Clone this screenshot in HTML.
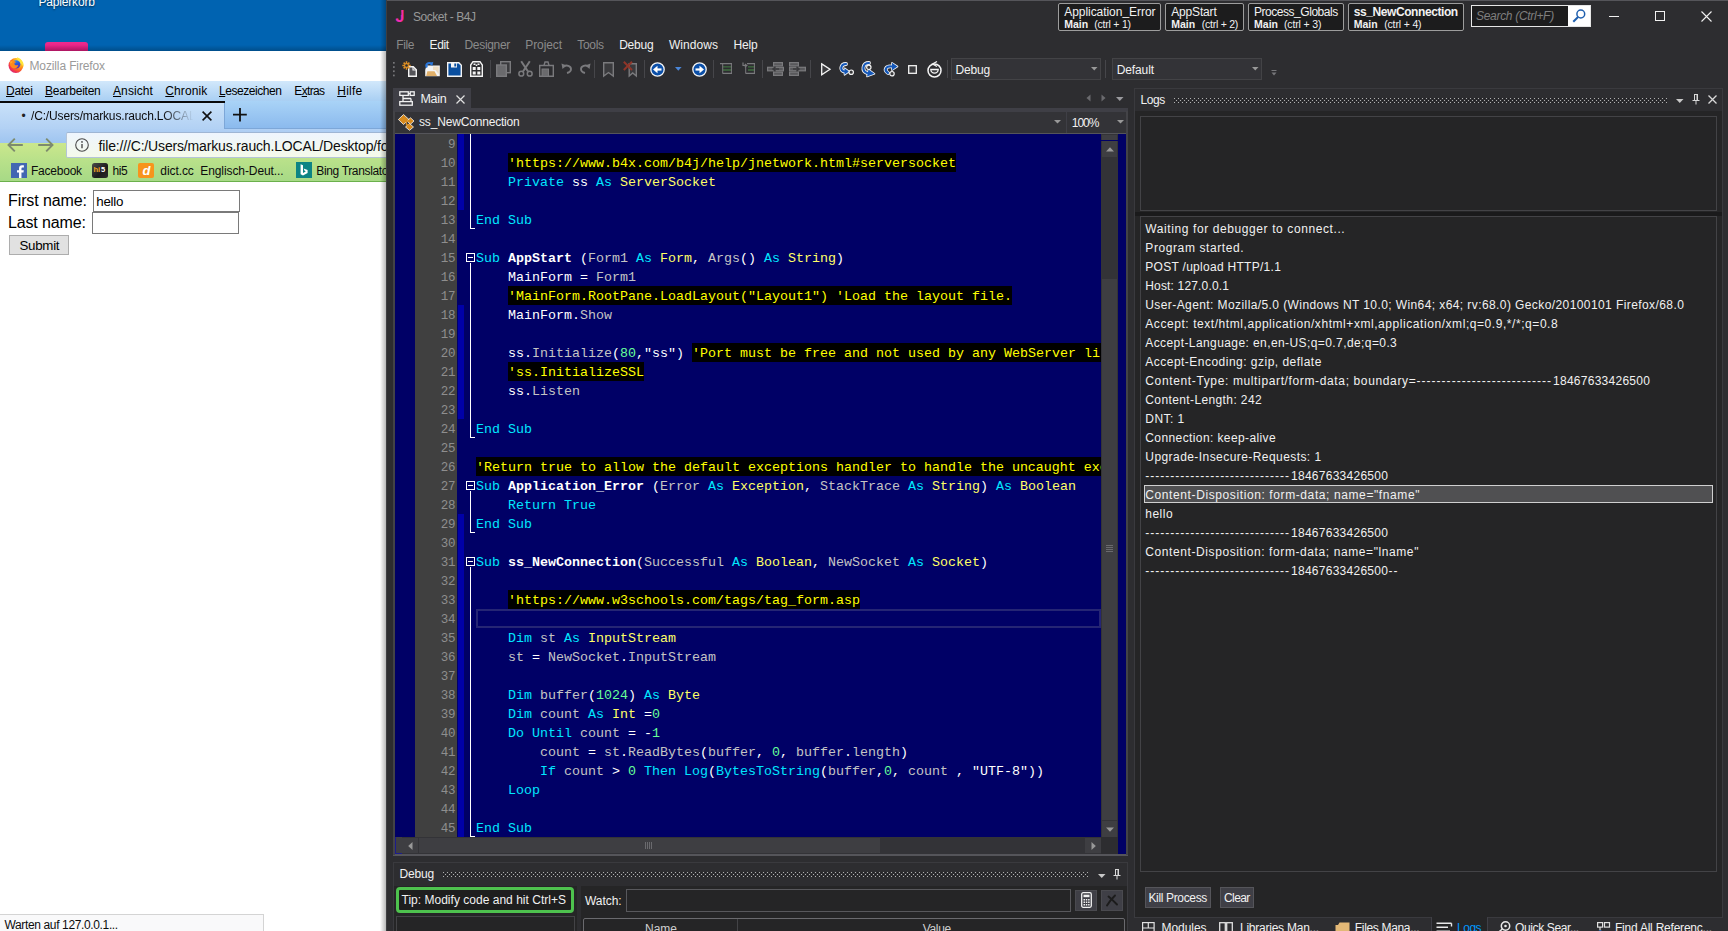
<!DOCTYPE html>
<html lang="en"><head><meta charset="utf-8"><title>Socket - B4J</title>
<style>
html,body{margin:0;padding:0;}
body{width:1728px;height:931px;overflow:hidden;position:relative;background:#2d2d30;font-family:"Liberation Sans", sans-serif;}
.t{position:absolute;white-space:pre;line-height:20px;font-family:"Liberation Sans", sans-serif;}
.r{position:absolute;box-sizing:border-box;}
.cl{position:absolute;left:476px;height:19px;line-height:19px;white-space:pre;font-family:"Liberation Mono", monospace;font-size:13.33px;color:#fff;}
.cl b{font-weight:700;color:#fff}
.k{color:#00e6ff}.y{color:#ffff66}.g{color:#c4c4c4}.n{color:#66ff99}.w{color:#ffffff}
.c{color:#ffff00;background:#000;display:inline-block;height:19px;line-height:21px;vertical-align:top;position:relative;top:-1px}
.ln{position:absolute;left:415px;width:40px;text-align:right;height:19px;line-height:19px;font-family:"Liberation Mono", monospace;font-size:12.5px;letter-spacing:-0.4px;color:#8e8e8e;}
svg{position:absolute;overflow:visible}
u{text-decoration:underline;text-underline-offset:1px}
</style></head>
<body>
<div class="r" style="left:0.00px;top:0.00px;width:386.00px;height:51.00px;background:#0063b1;"></div>
<span class="t" id="t1" style="left:38.50px;top:-8px;font-size:12.00px;color:#ffffff;letter-spacing:-0.182px;text-shadow:0 1px 2px rgba(0,0,0,.6);">Papierkorb</span>
<div class="r" style="left:45.00px;top:42.00px;width:43.00px;height:9.00px;background:linear-gradient(#f12a8e,#dc1c7c);border-radius:3px 3px 0 0;"></div>
<div class="r" style="left:0.00px;top:51.00px;width:386.00px;height:880.00px;background:#ffffff;"></div>
<svg style="left:8px;top:57px" width="16" height="16" viewBox="0 0 16 16">
<defs><radialGradient id="fx1" cx="0.78" cy="0.18" r="1.0"><stop offset="0" stop-color="#fff36a"/><stop offset="0.28" stop-color="#ffc21e"/><stop offset="0.55" stop-color="#ff7a1a"/><stop offset="0.8" stop-color="#f2334f"/><stop offset="1" stop-color="#c31f86"/></radialGradient>
<linearGradient id="fx2" x1="0" y1="0" x2="0.4" y2="1"><stop offset="0" stop-color="#2f9bf0"/><stop offset="0.6" stop-color="#2a55d8"/><stop offset="1" stop-color="#5a34b8"/></linearGradient></defs>
<circle cx="7.900" cy="8.500" r="7.400" fill="url(#fx1)"/>
<path d="M9 0.300C11.500 1 14 2.800 15.100 5.600C15.700 7.300 15.600 9.200 15.200 10.300C14.600 7.600 13.200 6 10.800 5.200C9.600 3.600 9.400 1.800 9 0.300Z" fill="#ffe53a"/>
<circle cx="8.200" cy="7.400" r="4.200" fill="url(#fx2)"/>
<path d="M1.800 5.500C3.600 3.400 6.800 3.900 8.200 5.300C7 5.400 6.300 6 6.400 7C6.600 8.400 8.600 8.700 10.200 7.900C9.800 10.300 7.600 11.800 5.300 11.200C3 10.600 1.300 8 1.800 5.500Z" fill="#ff8a1c"/>
<path d="M2.600 3.800C3.200 4.600 4.200 4.800 5.200 4.500C4 5 3.200 5.800 2.800 7C2.300 6 2.300 4.800 2.600 3.800Z" fill="#ffb52a"/>
</svg>
<span class="t" id="t2" style="left:29.50px;top:56px;font-size:12.00px;color:#9a9a9a;letter-spacing:-0.128px;">Mozilla Firefox</span>
<div class="r" style="left:0.00px;top:81.00px;width:386.00px;height:20.00px;background:linear-gradient(#d2e8fb,#a9cff3);"></div>
<span class="t" id="t3" style="left:6.00px;top:81px;font-size:12.00px;color:#000;letter-spacing:-0.296px;"><u>D</u>atei</span>
<span class="t" id="t4" style="left:45.00px;top:81px;font-size:12.00px;color:#000;letter-spacing:-0.259px;"><u>B</u>earbeiten</span>
<span class="t" id="t5" style="left:113.00px;top:81px;font-size:12.00px;color:#000;letter-spacing:0.096px;"><u>A</u>nsicht</span>
<span class="t" id="t6" style="left:165.30px;top:81px;font-size:12.00px;color:#000;letter-spacing:0.099px;"><u>C</u>hronik</span>
<span class="t" id="t7" style="left:219.00px;top:81px;font-size:12.00px;color:#000;letter-spacing:-0.439px;"><u>L</u>esezeichen</span>
<span class="t" id="t8" style="left:294.30px;top:81px;font-size:12.00px;color:#000;letter-spacing:-0.660px;">E<u>x</u>tras</span>
<span class="t" id="t9" style="left:337.20px;top:81px;font-size:12.00px;color:#000;letter-spacing:0.263px;"><u>H</u>ilfe</span>
<div class="r" style="left:0.00px;top:101.00px;width:386.00px;height:28.00px;background:linear-gradient(#a9d3f7,#8ab9ed);"></div>
<div class="r" style="left:224.00px;top:128.00px;width:162.00px;height:1.00px;background:#7da7d8;"></div>
<div class="r" style="left:0.00px;top:129.00px;width:386.00px;height:14.00px;background:linear-gradient(#b1d0f4,#9fc5f0);"></div>
<div class="r" style="left:0.00px;top:143.00px;width:386.00px;height:17.00px;background:linear-gradient(#cbe78c,#b9e18a);"></div>
<div class="r" style="left:0.00px;top:101.00px;width:224.50px;height:28.00px;background:linear-gradient(#cae2f9,#b2d1f4);border-right:1px solid #7da7d8;"></div>
<div class="r" style="left:0.00px;top:101.00px;width:224.50px;height:2.00px;background:#0a0a0a;"></div>
<span class="t" id="t10" style="left:21.50px;top:106px;font-size:12.00px;color:#222;">•</span>
<span class="t" id="t11" style="left:31.00px;top:106px;font-size:12.00px;color:#0c0c0d;letter-spacing:-0.153px;-webkit-mask-image:linear-gradient(90deg,#000 80%,transparent 99%);mask-image:linear-gradient(90deg,#000 80%,transparent 99%);">/C:/Users/markus.rauch.LOCAL</span>
<svg style="left:202px;top:110.500px" width="10" height="10" viewBox="0 0 10 10"><path d="M0.600 0.600L9.400 9.400M9.400 0.600L0.600 9.400" stroke="#111" stroke-width="1.600" fill="none"/></svg>
<svg style="left:233px;top:107.500px" width="14" height="14" viewBox="0 0 14 14"><path d="M7 0V13.500M0 6.700H13.800" stroke="#111" stroke-width="1.800" fill="none"/></svg>
<svg style="left:7px;top:138px" width="16" height="14" viewBox="0 0 16 14"><path d="M15.800 7H1.500M7.800 0.700L1.500 7L7.800 13.300" stroke="#7d8b6e" stroke-width="1.900" fill="none"/></svg>
<svg style="left:37.5px;top:138px" width="16" height="14" viewBox="0 0 16 14"><path d="M0.200 7H14.500M8.200 0.700L14.500 7L8.200 13.300" stroke="#7d8b6e" stroke-width="1.900" fill="none"/></svg>
<div class="r" style="left:65.50px;top:132.00px;width:330.00px;height:25.50px;background:linear-gradient(#eef5fe,#f5faea);border:1px solid #b4c4d8;border-radius:2px;border-top-color:#9fb6d4;"></div>
<svg style="left:75px;top:138px" width="14" height="14" viewBox="0 0 14 14"><circle cx="7" cy="7" r="6.300" stroke="#4a4a4a" stroke-width="1.100" fill="none"/><path d="M7 6V10.300" stroke="#4a4a4a" stroke-width="1.400"/><circle cx="7" cy="3.900" r="0.900" fill="#4a4a4a"/></svg>
<span class="t" id="t12" style="left:98.50px;top:136px;font-size:14.00px;color:#0c0c0d;letter-spacing:-0.159px;">file:///C:/Users/markus.rauch.LOCAL/Desktop/fo</span>
<div class="r" style="left:0.00px;top:160.00px;width:386.00px;height:22.00px;background:linear-gradient(#b9e18a,#a6d986);"></div>
<div class="r" style="left:0.00px;top:180.50px;width:386.00px;height:1.50px;background:#6bb04c;"></div>
<div class="r" style="left:11.00px;top:162.50px;width:15.50px;height:15.50px;background:#4267b2;"></div>
<svg style="left:11px;top:162.5px;overflow:hidden" width="15.5" height="15.5" viewBox="0 0 16 16"><path d="M10.8 16.5V9.8h2.1l.3-2.4h-2.4V5.9c0-.7.2-1.2 1.2-1.2h1.3V2.5c-.2 0-1-.1-1.9-.1-1.9 0-3.1 1.100-3.100 3.200v1.800H6.200v2.400h2.100V16z" fill="#fff"/></svg>
<span class="t" id="t13" style="left:31.00px;top:161px;font-size:12.00px;color:#0c0c0d;letter-spacing:-0.227px;">Facebook</span>
<div class="r" style="left:92.00px;top:162.50px;width:16.00px;height:15.50px;background:linear-gradient(135deg,#4a4a4a,#1c1c1c 60%,#2c2c2c);border-radius:2.5px;"></div>
<span class="t" id="t14" style="left:93.50px;top:160px;font-size:7.50px;color:#f7a823;font-weight:700;">hi</span>
<span class="t" id="t15" style="left:101.00px;top:160px;font-size:7.50px;color:#ffffff;font-weight:700;">5</span>
<span class="t" id="t16" style="left:112.50px;top:161px;font-size:12.00px;color:#0c0c0d;letter-spacing:-0.366px;">hi5</span>
<div class="r" style="left:138.30px;top:162.50px;width:15.50px;height:15.50px;background:#f7941d;border-radius:2px;"></div>
<span class="t" id="t17" style="left:142.50px;top:161px;font-size:13.00px;color:#fff;font-weight:700;font-style:italic;">d</span>
<span class="t" id="t18" style="left:160.30px;top:161px;font-size:12.00px;color:#0c0c0d;letter-spacing:-0.085px;">dict.cc  Englisch-Deut...</span>
<div class="r" style="left:296.00px;top:162.00px;width:16.00px;height:16.00px;background:#0c8484;"></div>
<svg style="left:296px;top:162px" width="16" height="16" viewBox="0 0 16 16"><path d="M4.6 2.300V12.200L7 13.600L11.600 10.900V8.100L7.600 6.600L8.600 8.800L9.800 9.400L7 11V3.200Z" fill="#fff"/></svg>
<span class="t" id="t19" style="left:316.30px;top:161px;font-size:12.00px;color:#0c0c0d;letter-spacing:-0.350px;">Bing Translato</span>
<span class="t" id="t20" style="left:8.00px;top:191px;font-size:16.00px;color:#000;letter-spacing:-0.097px;">First name:</span>
<div class="r" style="left:92.50px;top:190.00px;width:147.50px;height:22.00px;background:#fff;border:1px solid #7a7a7a;"></div>
<span class="t" id="t21" style="left:96.30px;top:192px;font-size:13.33px;color:#000;letter-spacing:-0.260px;">hello</span>
<span class="t" id="t22" style="left:8.00px;top:213px;font-size:16.00px;color:#000;letter-spacing:-0.143px;">Last name:</span>
<div class="r" style="left:92.00px;top:212.00px;width:147.00px;height:22.00px;background:#fff;border:1px solid #7a7a7a;"></div>
<div class="r" style="left:9.00px;top:235.00px;width:60.00px;height:20.00px;background:#e1e1e1;border:1px solid #adadad;"></div>
<span class="t" id="t23" style="left:19.40px;top:236px;font-size:13.33px;color:#000;letter-spacing:-0.270px;">Submit</span>
<div class="r" style="left:-1.00px;top:913.50px;width:265.00px;height:19.00px;background:#f9f9fa;border:1px solid #d4d4d4;"></div>
<span class="t" id="t24" style="left:4.50px;top:915px;font-size:12.00px;color:#0c0c0d;letter-spacing:-0.362px;">Warten auf 127.0.0.1...</span>
<div class="r" style="left:380.00px;top:0.00px;width:6.00px;height:931.00px;background:linear-gradient(90deg,rgba(0,0,0,0),rgba(0,0,0,.28));"></div>
<div class="r" style="left:386.00px;top:0.00px;width:1342.00px;height:931.00px;background:#2d2d30;"></div>
<div class="r" style="left:386.00px;top:0.00px;width:1342.00px;height:1.00px;background:#55555a;"></div>
<div class="r" style="left:386.00px;top:0.00px;width:1.00px;height:931.00px;background:#3e3e41;"></div>
<div class="r" style="left:0.00px;top:45.00px;width:386.00px;height:6.00px;background:linear-gradient(rgba(0,0,0,0),rgba(0,0,0,.22));"></div>
<span class="t" id="t25" style="left:395.30px;top:6px;font-size:16.50px;color:#f22bb0;font-weight:700;clip-path:polygon(6px 0,100% 0,100% 100%,0 100%,0 9px,6px 9px);">J</span>
<span class="t" id="t26" style="left:413.00px;top:7px;font-size:12.00px;color:#999999;letter-spacing:-0.455px;">Socket - B4J</span>
<span class="t" id="t27" style="left:396.20px;top:35px;font-size:12.00px;color:#8a8a8a;letter-spacing:-0.327px;">File</span>
<span class="t" id="t28" style="left:429.50px;top:35px;font-size:12.00px;color:#f1f1f1;letter-spacing:-0.339px;">Edit</span>
<span class="t" id="t29" style="left:464.50px;top:35px;font-size:12.00px;color:#8a8a8a;letter-spacing:-0.311px;">Designer</span>
<span class="t" id="t30" style="left:525.30px;top:35px;font-size:12.00px;color:#8a8a8a;letter-spacing:-0.101px;">Project</span>
<span class="t" id="t31" style="left:577.20px;top:35px;font-size:12.00px;color:#8a8a8a;letter-spacing:-0.270px;">Tools</span>
<span class="t" id="t32" style="left:619.20px;top:35px;font-size:12.00px;color:#f1f1f1;letter-spacing:-0.239px;">Debug</span>
<span class="t" id="t33" style="left:669.00px;top:35px;font-size:12.00px;color:#f1f1f1;letter-spacing:0.048px;">Windows</span>
<span class="t" id="t34" style="left:733.50px;top:35px;font-size:12.00px;color:#f1f1f1;letter-spacing:-0.139px;">Help</span>
<div class="r" style="left:1058.00px;top:3.00px;width:103.00px;height:28.00px;background:#1c1c1d;border:1px solid #9d9d9d;border-radius:2px;"></div>
<span class="t" id="t35" style="left:1064.20px;top:2px;font-size:12.00px;color:#f1f1f1;letter-spacing:-0.047px;">Application<span style="position:relative;top:-1.5px">_</span>Error</span>
<span class="t" id="t36" style="left:1064.20px;top:14px;font-size:10.50px;color:#f1f1f1;letter-spacing:0.022px;font-weight:700;">Main</span>
<span class="t" id="t37" style="left:1094.20px;top:14px;font-size:10.50px;color:#f1f1f1;letter-spacing:-0.210px;">(ctrl + 1)</span>
<div class="r" style="left:1165.00px;top:3.00px;width:78.70px;height:28.00px;background:#1c1c1d;border:1px solid #9d9d9d;border-radius:2px;"></div>
<span class="t" id="t38" style="left:1171.20px;top:2px;font-size:12.00px;color:#f1f1f1;letter-spacing:-0.160px;">AppStart</span>
<span class="t" id="t39" style="left:1171.20px;top:14px;font-size:10.50px;color:#f1f1f1;letter-spacing:0.022px;font-weight:700;">Main</span>
<span class="t" id="t40" style="left:1201.70px;top:14px;font-size:10.50px;color:#f1f1f1;letter-spacing:-0.242px;">(ctrl + 2)</span>
<div class="r" style="left:1248.00px;top:3.00px;width:95.50px;height:28.00px;background:#1c1c1d;border:1px solid #9d9d9d;border-radius:2px;"></div>
<span class="t" id="t41" style="left:1254.00px;top:2px;font-size:12.00px;color:#f1f1f1;letter-spacing:-0.464px;">Process<span style="position:relative;top:-1.5px">_</span>Globals</span>
<span class="t" id="t42" style="left:1254.00px;top:14px;font-size:10.50px;color:#f1f1f1;letter-spacing:0.022px;font-weight:700;">Main</span>
<span class="t" id="t43" style="left:1284.00px;top:14px;font-size:10.50px;color:#f1f1f1;letter-spacing:-0.147px;">(ctrl + 3)</span>
<div class="r" style="left:1348.00px;top:3.00px;width:115.50px;height:28.00px;background:#1c1c1d;border:1px solid #9d9d9d;border-radius:2px;"></div>
<span class="t" id="t44" style="left:1353.70px;top:2px;font-size:12.00px;color:#f1f1f1;letter-spacing:-0.414px;font-weight:700;">ss<span style="position:relative;top:-1.5px">_</span>NewConnection</span>
<span class="t" id="t45" style="left:1353.70px;top:14px;font-size:10.50px;color:#f1f1f1;letter-spacing:0.022px;font-weight:700;">Main</span>
<span class="t" id="t46" style="left:1384.20px;top:14px;font-size:10.50px;color:#f1f1f1;letter-spacing:-0.158px;">(ctrl + 4)</span>
<div class="r" style="left:1470.50px;top:5.00px;width:120.50px;height:22.00px;background:#1c1c1d;border:1px solid #e6e6e6;"></div>
<div class="r" style="left:1568.00px;top:6.00px;width:22.00px;height:20.00px;background:#ffffff;"></div>
<span class="t" id="t47" style="left:1476.00px;top:6px;font-size:12.00px;color:#7f7f7f;letter-spacing:-0.301px;font-style:italic;">Search (Ctrl+F)</span>
<svg style="left:1571px;top:8px" width="16" height="16" viewBox="0 0 16 16"><circle cx="9.8" cy="6" r="3.900" stroke="#1f5fae" stroke-width="1.5" fill="none"/><path d="M7 9L2.300 13.700" stroke="#1f5fae" stroke-width="2"/></svg>
<div class="r" style="left:1609.00px;top:16.00px;width:10.00px;height:1.00px;background:#f1f1f1;"></div>
<svg style="left:1655px;top:11px" width="11" height="11" viewBox="0 0 11 11"><rect x="0.5" y="0.5" width="9" height="9" stroke="#f1f1f1" stroke-width="1" fill="none"/></svg>
<svg style="left:1701px;top:11px" width="11" height="11" viewBox="0 0 11 11"><path d="M0.5 0.5L10.5 10.5M10.5 0.5L0.5 10.5" stroke="#f1f1f1" stroke-width="1.1" fill="none"/></svg>
<svg style="left:393.3px;top:62px" width="2" height="15" viewBox="0 0 2 15"><g fill="#77777a"><rect x="0" y="0" width="1.700" height="1.700"/><rect x="0" y="4.200" width="1.700" height="1.700"/><rect x="0" y="8.400" width="1.700" height="1.700"/><rect x="0" y="12.600" width="1.700" height="1.700"/></g></svg>
<svg style="left:402px;top:61px" width="16" height="16" viewBox="0 0 16 16"><path d="M6.700 5.700H11.300L14.300 8.700V15.300H6.700Z" fill="#55555a" stroke="#f4f4f4" stroke-width="1.400"/><path d="M11 6V9H14" stroke="#f4f4f4" stroke-width="1.100" fill="none"/><g stroke="#de8f24" stroke-width="1.500"><path d="M4.500 0.300V8.700M0.300 4.500H8.700M1.600 1.600L7.400 7.400M7.400 1.600L1.600 7.400"/></g><circle cx="4.500" cy="4.500" r="1.300" fill="#2d2d30"/></svg>
<svg style="left:423.5px;top:61px" width="17" height="16" viewBox="0 0 17 16"><path d="M2.500 4.500H15.800V15.300H1.200L1.200 9Z" fill="#f4f4f4"/><path d="M2.200 15L3.400 10.200H10.500L13 15Z" fill="#e0b06a"/><path d="M9 5.500H14.700V13L11.500 9H9Z" fill="#e8c690" opacity=".5"/><path d="M3 6.500C1 3.500 4 0.800 7.500 2.500" stroke="#2a78dc" stroke-width="2" fill="none"/><path d="M9.300 0.800L8.300 5L5.300 2.500Z" fill="#2a78dc"/></svg>
<svg style="left:447px;top:62px" width="15" height="15" viewBox="0 0 15 15"><path d="M0.700 0.700H11.800L14.300 3.200V14.300H0.700Z" fill="#0a4fa0" stroke="#f4f4f4" stroke-width="1.400"/><rect x="4" y="1" width="6" height="4.500" fill="#f4f4f4"/><rect x="7.300" y="1.500" width="1.900" height="3" fill="#0a4fa0"/></svg>
<svg style="left:469.5px;top:61px" width="13" height="16" viewBox="0 0 13 16"><path d="M0.700 4L3 0.700H10L12.300 4V15.300H0.700Z" fill="#2d2d30" stroke="#f4f4f4" stroke-width="1.400"/><g fill="#f4f4f4"><rect x="2.700" y="6" width="3" height="3"/><rect x="7.300" y="6" width="3" height="3"/><rect x="2.700" y="10.500" width="3" height="3"/><rect x="7.300" y="10.500" width="3" height="3"/><rect x="3.500" y="2.500" width="2" height="1.500"/><rect x="7.500" y="2.500" width="2" height="1.500"/><rect x="5.700" y="3.500" width="1.600" height="1.500"/></g></svg>
<div class="r" style="left:489.50px;top:60.00px;width:1.00px;height:18.00px;background:#46464a;"></div>
<svg style="left:495.5px;top:61px" width="15" height="16" viewBox="0 0 15 16"><rect x="4.700" y="0.700" width="9.600" height="11" fill="#3a3a3d" stroke="#7a7a7d" stroke-width="1.400"/><rect x="0.700" y="4" width="9.600" height="11.300" fill="#6a6a6d" stroke="#7a7a7d" stroke-width="1.400"/></svg>
<svg style="left:517.5px;top:61px" width="15" height="16" viewBox="0 0 15 16"><g stroke="#7a7a7d" stroke-width="2" fill="none"><path d="M3.200 0.300L10 10.500M11.800 0.300L5 10.500"/></g><g stroke="#7a7a7d" stroke-width="1.500" fill="none"><circle cx="3.300" cy="12.700" r="2.400"/><circle cx="11.700" cy="12.700" r="2.400"/></g></svg>
<svg style="left:539px;top:61px" width="15" height="16" viewBox="0 0 15 16"><g stroke="#7a7a7d" stroke-width="1.400" fill="none"><path d="M0.700 15.300V4.500H14.300V15.300Z"/><path d="M5 4.500L6 1H9L10 4.500"/></g><rect x="3" y="8" width="6.500" height="7.300" fill="#6a6a6d" stroke="#7a7a7d" stroke-width="1"/></svg>
<svg style="left:560.5px;top:63px" width="12" height="11" viewBox="0 0 12 11"><path d="M2.500 3.500C5.500 1.500 10 3 10 6C10 8 8 9.500 6 10" stroke="#7a7a7d" stroke-width="1.900" fill="none"/><path d="M0.500 0.500L5.500 2.500L1.500 6Z" fill="#7a7a7d"/></svg>
<svg style="left:578.5px;top:63px" width="12" height="11" viewBox="0 0 12 11"><path d="M9.500 3.500C6.500 1.500 2 3 2 6C2 8 4 9.500 6 10" stroke="#7a7a7d" stroke-width="1.900" fill="none"/><path d="M11.500 0.500L6.500 2.500L10.500 6Z" fill="#7a7a7d"/></svg>
<div class="r" style="left:594.00px;top:60.00px;width:1.00px;height:18.00px;background:#46464a;"></div>
<svg style="left:603px;top:62px" width="11" height="15" viewBox="0 0 11 15"><path d="M0.700 0.700H10.300V14L5.500 10.500L0.700 14Z" stroke="#7a7a7d" stroke-width="1.400" fill="#3a3a3d"/></svg>
<svg style="left:623px;top:61px" width="15" height="16" viewBox="0 0 15 16"><path d="M6.200 2.700H13.300V15L9.700 12L6.200 15Z" stroke="#7a7a7d" stroke-width="1.400" fill="#3a3a3d"/><path d="M0.800 0.800L9 9M9 0.800L0.800 9" stroke="#8f3529" stroke-width="2"/></svg>
<div class="r" style="left:643.50px;top:60.00px;width:1.00px;height:18.00px;background:#46464a;"></div>
<svg style="left:649.5px;top:61.500px" width="15" height="15" viewBox="0 0 15 15"><circle cx="7.500" cy="7.500" r="6.700" fill="#0b4fa8" stroke="#f4f4f4" stroke-width="1.300"/><path d="M11.500 7.500H5" stroke="#fff" stroke-width="2.200" fill="none"/><path d="M7.500 3.800V11.200L3 7.500Z" fill="#fff"/></svg>
<svg style="left:674.8px;top:66.700px" width="7" height="4" viewBox="0 0 7 4"><path d="M0 0H6.600L3.300 3.800Z" fill="#4a86d8"/></svg>
<svg style="left:691.6px;top:61.500px" width="15" height="15" viewBox="0 0 15 15"><circle cx="7.500" cy="7.500" r="6.700" fill="#0b4fa8" stroke="#f4f4f4" stroke-width="1.300"/><path d="M3.500 7.500H10" stroke="#fff" stroke-width="2.200" fill="none"/><path d="M7.500 3.800V11.200L12 7.500Z" fill="#fff"/></svg>
<div class="r" style="left:712.50px;top:60.00px;width:1.00px;height:18.00px;background:#46464a;"></div>
<svg style="left:720px;top:63px" width="12" height="11" viewBox="0 0 12 11"><g fill="none" stroke-width="1.300"><path d="M0 0.700H12M2.500 10.300H12" stroke="#7a7a7d"/><path d="M3 3.800H12M3 7H12" stroke="#3f6f3f"/><path d="M2.700 0.700V10.300M11.400 0.700V10.300" stroke="#7a7a7d" stroke-width="1"/></g></svg>
<svg style="left:741.5px;top:62px" width="13" height="12" viewBox="0 0 13 12"><g fill="none" stroke-width="1.300"><path d="M5 1.700H13M3.500 11.300H13" stroke="#7a7a7d"/><path d="M6 4.800H13M6 8H13" stroke="#3f6f3f"/><path d="M3.700 5V11.300M12.400 1.700V11.300" stroke="#7a7a7d" stroke-width="1"/><path d="M1 0.500V3.500H4.500M2.800 2L4.800 3.600L2.800 5.200" stroke="#7a7a7d" stroke-width="1.200"/></g></svg>
<div class="r" style="left:761.50px;top:60.00px;width:1.00px;height:18.00px;background:#46464a;"></div>
<svg style="left:767px;top:62px" width="17" height="14" viewBox="0 0 17 14"><g stroke="#7a7a7d" stroke-width="1.200" fill="#59595c"><rect x="6.600" y="0.600" width="8.800" height="3.300"/><rect x="0.600" y="5.300" width="15.800" height="3.500"/><rect x="6.600" y="10.100" width="8.800" height="3.300"/></g><path d="M12 7H6.500M8.500 4.800L6 7L8.500 9.200" stroke="#3a3a3d" stroke-width="1.500" fill="none"/></svg>
<svg style="left:789px;top:62px" width="17" height="14" viewBox="0 0 17 14"><g stroke="#7a7a7d" stroke-width="1.200" fill="#59595c"><rect x="0.600" y="0.600" width="8.800" height="3.300"/><rect x="0.600" y="5.300" width="15.800" height="3.500"/><rect x="0.600" y="10.100" width="8.800" height="3.300"/></g><path d="M4 7H9.500M7.500 4.800L10 7L7.500 9.200" stroke="#3a3a3d" stroke-width="1.500" fill="none"/></svg>
<div class="r" style="left:810.00px;top:60.00px;width:1.00px;height:18.00px;background:#46464a;"></div>
<svg style="left:820.5px;top:62.500px" width="10" height="13" viewBox="0 0 10 13"><path d="M0.700 0.900L9 6.300L0.700 11.700Z" stroke="#f4f4f4" stroke-width="1.300" fill="#3a3a3d"/></svg>
<svg style="left:837.5px;top:61.5px" width="17" height="14" viewBox="0 0 17 14"><path d="M8 2C2.500 2 1.500 9 6.500 9.500" stroke="#f4f4f4" stroke-width="3.800" fill="none" stroke-linecap="round"/><path d="M6.500 6.200L11 9.500L6.500 12.800Z" fill="#f4f4f4" stroke="#f4f4f4" stroke-width="1.600" stroke-linejoin="round"/><path d="M8 2C2.500 2 1.500 9 6.500 9.500" stroke="#1457b8" stroke-width="2.200" fill="none" stroke-linecap="round"/><path d="M6.500 6.200L11 9.500L6.500 12.800Z" fill="#1457b8"/><circle cx="13.2" cy="10.2" r="2.200" stroke="#f4f4f4" stroke-width="1.200" fill="#3a3a3d"/></svg>
<svg style="left:861px;top:61px" width="15" height="17" viewBox="0 0 15 17"><path d="M8 2C1.500 2 0.500 10 6 12" stroke="#f4f4f4" stroke-width="3.800" fill="none" stroke-linecap="round"/><path d="M7.500 8.500L13.500 12.800L6 15.500Z" fill="#f4f4f4" stroke="#f4f4f4" stroke-width="1.600" stroke-linejoin="round"/><path d="M8 2C1.500 2 0.500 10 6 12" stroke="#1457b8" stroke-width="2.200" fill="none" stroke-linecap="round"/><path d="M7.500 8.500L13.500 12.800L6 15.500Z" fill="#1457b8"/><circle cx="7.8" cy="6.3" r="2.200" stroke="#f4f4f4" stroke-width="1.200" fill="#3a3a3d"/></svg>
<svg style="left:882.5px;top:61.5px" width="16" height="15" viewBox="0 0 16 15"><path d="M5 11C0.500 8 3 3.500 9 4.500" stroke="#f4f4f4" stroke-width="3.800" fill="none" stroke-linecap="round"/><path d="M9 0.800L14.500 4.500L9 8.200Z" fill="#f4f4f4" stroke="#f4f4f4" stroke-width="1.600" stroke-linejoin="round"/><path d="M5 11C0.500 8 3 3.500 9 4.500" stroke="#1457b8" stroke-width="2.200" fill="none" stroke-linecap="round"/><path d="M9 0.800L14.500 4.500L9 8.200Z" fill="#1457b8"/><circle cx="9" cy="11.7" r="2.200" stroke="#f4f4f4" stroke-width="1.200" fill="#3a3a3d"/></svg>
<svg style="left:907.5px;top:64.500px" width="9" height="9" viewBox="0 0 9 9"><rect x="0.700" y="0.700" width="7.600" height="7.600" stroke="#f4f4f4" stroke-width="1.300" fill="#3a3a3d"/></svg>
<svg style="left:926.5px;top:61px" width="15" height="17" viewBox="0 0 15 17"><circle cx="7.500" cy="9.500" r="6.500" stroke="#f4f4f4" stroke-width="1.500" fill="none"/><path d="M3.800 8.500A3.700 3.700 0 0 0 11.200 8.500Z" stroke="#f4f4f4" stroke-width="1.300" fill="#3a3a3d"/><path d="M10 0.500L5.500 3L10 5.500" stroke="#f4f4f4" stroke-width="1.300" fill="none"/></svg>
<div class="r" style="left:947.00px;top:60.00px;width:1.00px;height:18.00px;background:#46464a;"></div>
<div class="r" style="left:951.00px;top:58.00px;width:150.00px;height:21.50px;background:#333337;border:1px solid #434346;"></div>
<span class="t" id="t48" style="left:955.50px;top:60px;font-size:12.00px;color:#f1f1f1;letter-spacing:-0.194px;">Debug</span>
<svg style="left:1091px;top:66.500px" width="7" height="4" viewBox="0 0 7 4"><path d="M0 0H6.500L3.250 3.500Z" fill="#999"/></svg>
<div class="r" style="left:1105.00px;top:60.00px;width:1.00px;height:18.00px;background:#46464a;"></div>
<div class="r" style="left:1112.00px;top:58.00px;width:150.00px;height:21.50px;background:#333337;border:1px solid #434346;"></div>
<span class="t" id="t49" style="left:1116.70px;top:60px;font-size:12.00px;color:#f1f1f1;letter-spacing:-0.113px;">Default</span>
<svg style="left:1252px;top:66.500px" width="7" height="4" viewBox="0 0 7 4"><path d="M0 0H6.500L3.250 3.500Z" fill="#999"/></svg>
<svg style="left:1270.5px;top:70px" width="6" height="6" viewBox="0 0 6 6"><path d="M0.500 0.500H5.500" stroke="#77777a" stroke-width="1"/><path d="M0.500 2.500H5.500L3 5.500Z" fill="#77777a"/></svg>
<div class="r" style="left:393.00px;top:88.00px;width:78.00px;height:20.00px;background:#3f3f46;"></div>
<div class="r" style="left:393.00px;top:108.00px;width:735.00px;height:3.00px;background:#3f3f46;"></div>
<svg style="left:399px;top:91px" width="16" height="15" viewBox="0 0 16 15"><g stroke="#f1f1f1" stroke-width="1.3" fill="none"><rect x="0.8" y="0.8" width="8.500" height="3.600"/><rect x="11.200" y="0.8" width="4" height="3.600"/><rect x="0.8" y="10.600" width="12.500" height="3.600"/><path d="M9.300 2.600H11.200M4 4.400V10.600M4 7.500H12M12 7.500V10.600"/></g></svg>
<span class="t" id="t50" style="left:420.50px;top:89px;font-size:12.50px;color:#f1f1f1;letter-spacing:-0.312px;">Main</span>
<svg style="left:455.5px;top:94.500px" width="9" height="9" viewBox="0 0 9 9"><path d="M0.5 0.5L8.500 8.500M8.500 0.5L0.5 8.500" stroke="#e0e0e0" stroke-width="1.2" fill="none"/></svg>
<svg style="left:1085px;top:94px" width="40" height="9" viewBox="0 0 40 9"><path d="M5.500 0.5V7.500L1.500 4Z" fill="#6a6a6e"/><path d="M16.500 0.5V7.500L20.500 4Z" fill="#6a6a6e"/><path d="M31 3H38.500L34.750 7Z" fill="#9a9a9e"/></svg>
<div class="r" style="left:393.00px;top:111.00px;width:735.00px;height:23.00px;background:#3f3f46;"></div>
<div class="r" style="left:395.00px;top:112.00px;width:671.00px;height:20.50px;background:#333337;"></div>
<div class="r" style="left:1067.00px;top:112.00px;width:59.50px;height:20.50px;background:#333337;"></div>
<svg style="left:398px;top:114px" width="17" height="16" viewBox="0 0 17 16"><g fill="#d68a1e" stroke="#f4f4f4" stroke-width="0.800"><path d="M5.500 0.500L11 5.500L5.500 10.500L0.400 5.500Z"/><path d="M12.500 3.800L16 7L12.500 10.200L9 7Z"/><path d="M11.500 9.500L15.500 13L11.500 16.300L7.500 13Z"/></g><path d="M8.500 7V11H11.500M8.500 7H11" stroke="#d68a1e" stroke-width="1.300" fill="none"/></svg>
<span class="t" id="t51" style="left:419.00px;top:112px;font-size:12.00px;color:#f1f1f1;letter-spacing:-0.174px;">ss_NewConnection</span>
<svg style="left:1054px;top:120px" width="8" height="4" viewBox="0 0 8 4"><path d="M0 0H7L3.500 3.500Z" fill="#999"/></svg>
<span class="t" id="t52" style="left:1071.70px;top:113px;font-size:12.00px;color:#f1f1f1;letter-spacing:-0.972px;">100%</span>
<svg style="left:1116.5px;top:120px" width="8" height="4" viewBox="0 0 8 4"><path d="M0 0H7L3.500 3.500Z" fill="#999"/></svg>
<div class="r" style="left:395.00px;top:134.00px;width:731.00px;height:703.00px;background:#000066;"></div>
<div class="r" style="left:415.00px;top:134.00px;width:42.00px;height:703.00px;background:#404040;"></div>
<div class="r" style="left:458.00px;top:134.00px;width:6.00px;height:76.00px;background:#0000a8;"></div>
<div class="r" style="left:458.00px;top:305.00px;width:6.00px;height:114.00px;background:#0000a8;"></div>
<div class="r" style="left:458.00px;top:514.00px;width:6.00px;height:323.00px;background:#0000a8;"></div>
<div class="r" style="left:476.00px;top:609.00px;width:625.00px;height:19.00px;background:#000066;border:2px solid #252574;"></div>
<div class="r" style="left:0;top:0;width:1101px;height:837px;overflow:hidden">
<div class="ln" style="top:136px">9</div>
<div class="ln" style="top:155px">10</div>
<div class="cl" style="top:154px">    <span class="c">'https://www.b4x.com/b4j/help/jnetwork.html#serversocket</span></div>
<div class="ln" style="top:174px">11</div>
<div class="cl" style="top:173px">    <span class="k">Private</span> ss <span class="k">As</span> <span class="y">ServerSocket</span></div>
<div class="ln" style="top:193px">12</div>
<div class="ln" style="top:212px">13</div>
<div class="cl" style="top:211px"><span class="k">End Sub</span></div>
<div class="ln" style="top:231px">14</div>
<div class="ln" style="top:250px">15</div>
<div class="cl" style="top:249px"><span class="k">Sub</span> <b>AppStart</b> (<span class="g">Form1</span> <span class="k">As</span> <span class="y">Form</span>, <span class="g">Args</span>() <span class="k">As</span> <span class="y">String</span>)</div>
<div class="ln" style="top:269px">16</div>
<div class="cl" style="top:268px">    MainForm = <span class="g">Form1</span></div>
<div class="ln" style="top:288px">17</div>
<div class="cl" style="top:287px">    <span class="c">'MainForm.RootPane.LoadLayout("Layout1") 'Load the layout file.</span></div>
<div class="ln" style="top:307px">18</div>
<div class="cl" style="top:306px">    MainForm.<span class="g">Show</span></div>
<div class="ln" style="top:326px">19</div>
<div class="ln" style="top:345px">20</div>
<div class="cl" style="top:344px">    ss.<span class="g">Initialize</span>(<span class="n">80</span>,"ss") <span class="c">'Port must be free and not used by any WebServer like Apache</span></div>
<div class="ln" style="top:364px">21</div>
<div class="cl" style="top:363px">    <span class="c">'ss.InitializeSSL</span></div>
<div class="ln" style="top:383px">22</div>
<div class="cl" style="top:382px">    ss.<span class="g">Listen</span></div>
<div class="ln" style="top:402px">23</div>
<div class="ln" style="top:421px">24</div>
<div class="cl" style="top:420px"><span class="k">End Sub</span></div>
<div class="ln" style="top:440px">25</div>
<div class="ln" style="top:459px">26</div>
<div class="cl" style="top:458px"><span class="c">'Return true to allow the default exceptions handler to handle the uncaught exception.</span></div>
<div class="ln" style="top:478px">27</div>
<div class="cl" style="top:477px"><span class="k">Sub</span> <b>Application_Error</b> (<span class="g">Error</span> <span class="k">As</span> <span class="y">Exception</span>, <span class="g">StackTrace</span> <span class="k">As</span> <span class="y">String</span>) <span class="k">As</span> <span class="y">Boolean</span></div>
<div class="ln" style="top:497px">28</div>
<div class="cl" style="top:496px">    <span class="k">Return True</span></div>
<div class="ln" style="top:516px">29</div>
<div class="cl" style="top:515px"><span class="k">End Sub</span></div>
<div class="ln" style="top:535px">30</div>
<div class="ln" style="top:554px">31</div>
<div class="cl" style="top:553px"><span class="k">Sub</span> <b>ss_NewConnection</b>(<span class="g">Successful</span> <span class="k">As</span> <span class="y">Boolean</span>, <span class="g">NewSocket</span> <span class="k">As</span> <span class="y">Socket</span>)</div>
<div class="ln" style="top:573px">32</div>
<div class="ln" style="top:592px">33</div>
<div class="cl" style="top:591px">    <span class="c">'https://www.w3schools.com/tags/tag_form.asp</span></div>
<div class="ln" style="top:611px">34</div>
<div class="ln" style="top:630px">35</div>
<div class="cl" style="top:629px">    <span class="k">Dim</span><span class="g"> st </span><span class="k">As</span> <span class="y">InputStream</span></div>
<div class="ln" style="top:649px">36</div>
<div class="cl" style="top:648px">    <span class="g">st</span> = <span class="g">NewSocket</span>.<span class="g">InputStream</span></div>
<div class="ln" style="top:668px">37</div>
<div class="ln" style="top:687px">38</div>
<div class="cl" style="top:686px">    <span class="k">Dim</span><span class="g"> buffer</span>(<span class="n">1024</span>) <span class="k">As</span> <span class="y">Byte</span></div>
<div class="ln" style="top:706px">39</div>
<div class="cl" style="top:705px">    <span class="k">Dim</span><span class="g"> count </span><span class="k">As</span> <span class="y">Int</span> =<span class="n">0</span></div>
<div class="ln" style="top:725px">40</div>
<div class="cl" style="top:724px">    <span class="k">Do Until</span><span class="g"> count</span> = -<span class="n">1</span></div>
<div class="ln" style="top:744px">41</div>
<div class="cl" style="top:743px">        <span class="g">count</span> = <span class="g">st</span>.<span class="g">ReadBytes</span>(<span class="g">buffer</span>, <span class="n">0</span>, <span class="g">buffer</span>.<span class="g">length</span>)</div>
<div class="ln" style="top:763px">42</div>
<div class="cl" style="top:762px">        <span class="k">If</span><span class="g"> count</span> &gt; <span class="n">0</span> <span class="k">Then</span> <span class="k">Log</span>(<span class="k">BytesToString</span>(<span class="g">buffer</span>,<span class="n">0</span>, <span class="g">count</span> , "UTF-8"))</div>
<div class="ln" style="top:782px">43</div>
<div class="cl" style="top:781px">    <span class="k">Loop</span></div>
<div class="ln" style="top:801px">44</div>
<div class="ln" style="top:820px">45</div>
<div class="cl" style="top:819px"><span class="k">End Sub</span></div>
</div>
<div class="r" style="left:470.00px;top:134.00px;width:1.00px;height:95.00px;background:#fff;"></div>
<div class="r" style="left:470.00px;top:228.00px;width:5.00px;height:1.00px;background:#fff;"></div>
<div class="r" style="left:470.00px;top:263.00px;width:1.00px;height:175.00px;background:#fff;"></div>
<div class="r" style="left:470.00px;top:437.00px;width:5.00px;height:1.00px;background:#fff;"></div>
<div class="r" style="left:466.00px;top:253.00px;width:9.00px;height:9.00px;background:#000066;border:1px solid #fff;"></div>
<div class="r" style="left:468.00px;top:257.00px;width:5.00px;height:1.00px;background:#fff;"></div>
<div class="r" style="left:470.00px;top:491.00px;width:1.00px;height:42.00px;background:#fff;"></div>
<div class="r" style="left:470.00px;top:532.00px;width:5.00px;height:1.00px;background:#fff;"></div>
<div class="r" style="left:466.00px;top:481.00px;width:9.00px;height:9.00px;background:#000066;border:1px solid #fff;"></div>
<div class="r" style="left:468.00px;top:485.00px;width:5.00px;height:1.00px;background:#fff;"></div>
<div class="r" style="left:470.00px;top:567.00px;width:1.00px;height:270.00px;background:#fff;"></div>
<div class="r" style="left:470.00px;top:836.00px;width:5.00px;height:1.00px;background:#fff;"></div>
<div class="r" style="left:466.00px;top:557.00px;width:9.00px;height:9.00px;background:#000066;border:1px solid #fff;"></div>
<div class="r" style="left:468.00px;top:561.00px;width:5.00px;height:1.00px;background:#fff;"></div>
<div class="r" style="left:470.00px;top:836.00px;width:5.00px;height:1.00px;background:#fff;"></div>
<div class="r" style="left:1101.00px;top:134.00px;width:17.00px;height:703.00px;background:#333337;"></div>
<div class="r" style="left:1102.00px;top:135.00px;width:15.00px;height:5.00px;background:#3e3e42;"></div>
<div class="r" style="left:1101.00px;top:140.00px;width:17.00px;height:1.00px;background:#000066;"></div>
<div class="r" style="left:1102.00px;top:141.00px;width:15.00px;height:15.50px;background:#3e3e42;"></div>
<div class="r" style="left:1102.00px;top:279.00px;width:15.00px;height:540.50px;background:#3e3e42;"></div>
<div class="r" style="left:1102.00px;top:821.00px;width:15.00px;height:15.50px;background:#3e3e42;"></div>
<svg style="left:1105.5px;top:146.500px" width="8" height="5" viewBox="0 0 8 5"><path d="M0 4.500H8L4 0.200Z" fill="#999"/></svg>
<svg style="left:1105.5px;top:826.500px" width="8" height="5" viewBox="0 0 8 5"><path d="M0 0.500H8L4 4.800Z" fill="#999"/></svg>
<div class="r" style="left:1106.00px;top:545.00px;width:7.00px;height:1.00px;background:#6a6a6e;"></div>
<div class="r" style="left:1106.00px;top:547.00px;width:7.00px;height:1.00px;background:#6a6a6e;"></div>
<div class="r" style="left:1106.00px;top:549.00px;width:7.00px;height:1.00px;background:#6a6a6e;"></div>
<div class="r" style="left:1106.00px;top:551.00px;width:7.00px;height:1.00px;background:#6a6a6e;"></div>
<div class="r" style="left:395.00px;top:837.00px;width:706.00px;height:17.00px;background:#333337;"></div>
<div class="r" style="left:395.00px;top:837.00px;width:7.00px;height:17.00px;background:#3e3e42;border-left:1px solid #1c1c8c;border-bottom:1px solid #1c1c8c;"></div>
<div class="r" style="left:402.00px;top:838.00px;width:16.00px;height:15.00px;background:#3e3e42;"></div>
<div class="r" style="left:419.00px;top:838.00px;width:461.00px;height:15.00px;background:#3e3e42;"></div>
<div class="r" style="left:1085.00px;top:838.00px;width:16.00px;height:15.00px;background:#3e3e42;"></div>
<svg style="left:407.5px;top:841.500px" width="5" height="8" viewBox="0 0 5 8"><path d="M4.500 0V8L0.200 4Z" fill="#999"/></svg>
<svg style="left:1090.5px;top:841.500px" width="5" height="8" viewBox="0 0 5 8"><path d="M0.500 0V8L4.800 4Z" fill="#999"/></svg>
<div class="r" style="left:645.00px;top:842.00px;width:1.00px;height:7.00px;background:#6a6a6e;"></div>
<div class="r" style="left:647.00px;top:842.00px;width:1.00px;height:7.00px;background:#6a6a6e;"></div>
<div class="r" style="left:649.00px;top:842.00px;width:1.00px;height:7.00px;background:#6a6a6e;"></div>
<div class="r" style="left:651.00px;top:842.00px;width:1.00px;height:7.00px;background:#6a6a6e;"></div>
<div class="r" style="left:1101.00px;top:837.00px;width:17.00px;height:17.00px;background:#2d2d30;"></div>
<div class="r" style="left:1118.00px;top:837.00px;width:8.00px;height:17.00px;background:#000066;"></div>
<div class="r" style="left:393.00px;top:133.00px;width:735.00px;height:1.00px;background:#55555a;"></div>
<div class="r" style="left:393.00px;top:854.00px;width:735.00px;height:1.50px;background:#55555a;"></div>
<div class="r" style="left:393.00px;top:111.00px;width:2.00px;height:744.00px;background:#434347;"></div>
<div class="r" style="left:1126.00px;top:111.00px;width:2.00px;height:744.00px;background:#434347;"></div>
<div class="r" style="left:1134.00px;top:88.00px;width:589.00px;height:830.00px;background:#252526;border:1px solid #3a3a3e;"></div>
<div class="r" style="left:1135.00px;top:89.00px;width:587.00px;height:22.00px;background:#2d2d30;"></div>
<span class="t" id="t53" style="left:1140.50px;top:90px;font-size:12.00px;color:#f1f1f1;letter-spacing:-0.438px;">Logs</span>
<svg style="left:1174px;top:98px" width="493" height="5" viewBox="0 0 493 5" shape-rendering="crispEdges"><defs><pattern id="gp1" width="4" height="4" patternUnits="userSpaceOnUse"><rect x="0" y="0" width="1" height="1" fill="#b0b0b0"/><rect x="2" y="2" width="1" height="1" fill="#b0b0b0"/><rect x="2" y="0" width="1" height="1" fill="#202022"/><rect x="0" y="2" width="1" height="1" fill="#202022"/></pattern></defs><rect width="493" height="5" fill="url(#gp1)"/></svg>
<svg style="left:1676px;top:98.500px" width="8" height="4" viewBox="0 0 8 4"><path d="M0 0H7.500L3.750 4Z" fill="#c8c8c8"/></svg>
<svg style="left:1691.5px;top:94px" width="8" height="11" viewBox="0 0 8 11"><g stroke="#d8d8d8" stroke-width="1" fill="none"><path d="M2 0.500H6M2.500 0.500V6M5.500 0.500V6M0.500 6.500H7.500M4 6.500V10.500"/></g><rect x="4.500" y="1" width="1.200" height="5" fill="#d8d8d8"/></svg>
<svg style="left:1707.5px;top:95px" width="9" height="9" viewBox="0 0 9 9"><path d="M0.500 0.500L8.500 8.500M8.500 0.500L0.500 8.500" stroke="#d8d8d8" stroke-width="1.300" fill="none"/></svg>
<div class="r" style="left:1140.00px;top:116.00px;width:577.00px;height:95.00px;background:#252526;border:1px solid #434346;"></div>
<div class="r" style="left:1135.00px;top:211.50px;width:587.00px;height:4.50px;background:#1a1a1b;"></div>
<div class="r" style="left:1140.00px;top:216.00px;width:577.00px;height:655.50px;background:#252526;border:1px solid #434346;"></div>
<div class="r" style="left:1144.00px;top:484.50px;width:569.00px;height:18.50px;background:#505052;border:1px solid #d0d0d0;"></div>
<span class="t" id="t54" style="left:1145.30px;top:219px;font-size:12.00px;color:#f1f1f1;letter-spacing:0.598px;">Waiting for debugger to connect...</span>
<span class="t" id="t55" style="left:1145.30px;top:238px;font-size:12.00px;color:#f1f1f1;letter-spacing:0.595px;">Program started.</span>
<span class="t" id="t56" style="left:1145.30px;top:257px;font-size:12.00px;color:#f1f1f1;letter-spacing:0.286px;">POST /upload HTTP/1.1</span>
<span class="t" id="t57" style="left:1145.30px;top:276px;font-size:12.00px;color:#f1f1f1;letter-spacing:0.159px;">Host: 127.0.0.1</span>
<span class="t" id="t58" style="left:1145.30px;top:295px;font-size:12.00px;color:#f1f1f1;letter-spacing:0.410px;">User-Agent: Mozilla/5.0 (Windows NT 10.0; Win64; x64; rv:68.0) Gecko/20100101 Firefox/68.0</span>
<span class="t" id="t59" style="left:1145.30px;top:314px;font-size:12.00px;color:#f1f1f1;letter-spacing:0.560px;">Accept: text/html,application/xhtml+xml,application/xml;q=0.9,*/*;q=0.8</span>
<span class="t" id="t60" style="left:1145.30px;top:333px;font-size:12.00px;color:#f1f1f1;letter-spacing:0.410px;">Accept-Language: en,en-US;q=0.7,de;q=0.3</span>
<span class="t" id="t61" style="left:1145.30px;top:352px;font-size:12.00px;color:#f1f1f1;letter-spacing:0.481px;">Accept-Encoding: gzip, deflate</span>
<span class="t" id="t62" style="left:1145.30px;top:371px;font-size:12.00px;color:#f1f1f1;letter-spacing:0.634px;">Content-Type: multipart/form-data; boundary=</span>
<span class="t" id="t63" style="left:1416.50px;top:371px;font-size:12.00px;color:#f1f1f1;letter-spacing:1.022px;">---------------------------</span>
<span class="t" id="t64" style="left:1553.00px;top:371px;font-size:12.00px;color:#f1f1f1;letter-spacing:0.264px;">18467633426500</span>
<span class="t" id="t65" style="left:1145.30px;top:390px;font-size:12.00px;color:#f1f1f1;letter-spacing:0.383px;">Content-Length: 242</span>
<span class="t" id="t66" style="left:1145.30px;top:409px;font-size:12.00px;color:#f1f1f1;letter-spacing:0.439px;">DNT: 1</span>
<span class="t" id="t67" style="left:1145.30px;top:428px;font-size:12.00px;color:#f1f1f1;letter-spacing:0.396px;">Connection: keep-alive</span>
<span class="t" id="t68" style="left:1145.30px;top:447px;font-size:12.00px;color:#f1f1f1;letter-spacing:0.433px;">Upgrade-Insecure-Requests: 1</span>
<span class="t" id="t69" style="left:1145.30px;top:466px;font-size:12.00px;color:#f1f1f1;letter-spacing:0.993px;">-----------------------------</span>
<span class="t" id="t70" style="left:1291.00px;top:466px;font-size:12.00px;color:#f1f1f1;letter-spacing:0.264px;">18467633426500</span>
<span class="t" id="t71" style="left:1145.30px;top:485px;font-size:12.00px;color:#f1f1f1;letter-spacing:0.602px;">Content-Disposition: form-data; name="fname"</span>
<span class="t" id="t72" style="left:1145.30px;top:504px;font-size:12.00px;color:#f1f1f1;letter-spacing:0.476px;">hello</span>
<span class="t" id="t73" style="left:1145.30px;top:523px;font-size:12.00px;color:#f1f1f1;letter-spacing:0.993px;">-----------------------------</span>
<span class="t" id="t74" style="left:1291.00px;top:523px;font-size:12.00px;color:#f1f1f1;letter-spacing:0.264px;">18467633426500</span>
<span class="t" id="t75" style="left:1145.30px;top:542px;font-size:12.00px;color:#f1f1f1;letter-spacing:0.592px;">Content-Disposition: form-data; name="lname"</span>
<span class="t" id="t76" style="left:1145.30px;top:561px;font-size:12.00px;color:#f1f1f1;letter-spacing:0.993px;">-----------------------------</span>
<span class="t" id="t77" style="left:1291.00px;top:561px;font-size:12.00px;color:#f1f1f1;letter-spacing:0.264px;">18467633426500</span>
<span class="t" id="t78" style="left:1388.50px;top:561px;font-size:12.00px;color:#f1f1f1;letter-spacing:1.000px;">--</span>
<div class="r" style="left:1145.00px;top:887.00px;width:65.50px;height:21.00px;background:#3f3f46;border:1px solid #55555a;"></div>
<span class="t" id="t79" style="left:1148.40px;top:888px;font-size:12.00px;color:#f1f1f1;letter-spacing:-0.338px;">Kill Process</span>
<div class="r" style="left:1220.00px;top:887.00px;width:33.50px;height:21.00px;background:#3f3f46;border:1px solid #55555a;"></div>
<span class="t" id="t80" style="left:1224.00px;top:888px;font-size:12.00px;color:#f1f1f1;letter-spacing:-0.597px;">Clear</span>
<div class="r" style="left:1134.00px;top:918.00px;width:594.00px;height:13.00px;background:#2d2d30;"></div>
<div class="r" style="left:1431.00px;top:917.00px;width:56.50px;height:14.00px;background:#252526;border-left:1px solid #3f3f46;border-right:1px solid #3f3f46;"></div>
<svg style="left:1142px;top:922px" width="13" height="11" viewBox="0 0 13 11"><g stroke="#e0e0e0" stroke-width="1.200" fill="none"><rect x="0.600" y="0.600" width="11.500" height="10"/><path d="M6.300 0.600V6M0.600 6H12"/></g></svg>
<span class="t" id="t81" style="left:1161.50px;top:918px;font-size:12.00px;color:#f1f1f1;letter-spacing:-0.040px;">Modules</span>
<svg style="left:1219px;top:922px" width="14" height="11" viewBox="0 0 14 11"><g stroke="#e0e0e0" stroke-width="1.300" fill="none"><rect x="0.700" y="0.700" width="5.600" height="10"/><rect x="7.700" y="0.700" width="5.600" height="10"/></g></svg>
<span class="t" id="t82" style="left:1240.00px;top:918px;font-size:12.00px;color:#f1f1f1;letter-spacing:-0.239px;">Libraries Man...</span>
<svg style="left:1335px;top:922px" width="15" height="11" viewBox="0 0 15 11"><path d="M0.500 11V3H3L4.500 0.500H14.500V11Z" fill="#e3b876"/></svg>
<span class="t" id="t83" style="left:1354.80px;top:918px;font-size:12.00px;color:#f1f1f1;letter-spacing:-0.328px;">Files Mana...</span>
<svg style="left:1436px;top:922px" width="16" height="11" viewBox="0 0 16 11"><g stroke="#e8e8e8" stroke-width="1.400" fill="none"><path d="M0.500 1.200H15.500M15.500 1.200V4.500M0.500 5.200H12M0.500 9.200H14"/></g></svg>
<span class="t" id="t84" style="left:1457.00px;top:918px;font-size:12.00px;color:#0097fb;letter-spacing:-0.466px;">Logs</span>
<svg style="left:1496px;top:921px" width="15" height="12" viewBox="0 0 15 12"><g stroke="#e8e8e8" stroke-width="1.500" fill="none"><circle cx="9.500" cy="5" r="4.200"/><path d="M6.300 8L1 12.500"/></g><circle cx="9.500" cy="5" r="1.300" fill="#e8e8e8"/></svg>
<span class="t" id="t85" style="left:1515.00px;top:918px;font-size:12.00px;color:#f1f1f1;letter-spacing:-0.376px;">Quick Sear...</span>
<svg style="left:1596.5px;top:922px" width="13" height="11" viewBox="0 0 13 11"><g stroke="#e0e0e0" stroke-width="1.200" fill="none"><rect x="0.600" y="0.600" width="5" height="4.500"/><rect x="7.500" y="0.600" width="5" height="4.500"/><path d="M3 5.100V8"/></g><circle cx="3.200" cy="10" r="1.800" fill="#2a7fe0"/></svg>
<span class="t" id="t86" style="left:1615.00px;top:918px;font-size:12.00px;color:#f1f1f1;letter-spacing:-0.225px;">Find All Referenc...</span>
<div class="r" style="left:393.00px;top:862.00px;width:735.00px;height:70.00px;background:#252526;border:1px solid #3a3a3e;"></div>
<div class="r" style="left:394.00px;top:863.00px;width:733.00px;height:22.50px;background:#2d2d30;"></div>
<span class="t" id="t87" style="left:399.40px;top:864px;font-size:12.00px;color:#f1f1f1;letter-spacing:-0.172px;">Debug</span>
<svg style="left:443px;top:872px" width="646" height="5" viewBox="0 0 646 5" shape-rendering="crispEdges"><defs><pattern id="gp2" width="4" height="4" patternUnits="userSpaceOnUse"><rect x="0" y="0" width="1" height="1" fill="#b0b0b0"/><rect x="2" y="2" width="1" height="1" fill="#b0b0b0"/><rect x="2" y="0" width="1" height="1" fill="#202022"/><rect x="0" y="2" width="1" height="1" fill="#202022"/></pattern></defs><rect width="646" height="5" fill="url(#gp2)"/></svg>
<svg style="left:1097.5px;top:874px" width="8" height="4" viewBox="0 0 8 4"><path d="M0 0H7.500L3.750 4Z" fill="#c8c8c8"/></svg>
<svg style="left:1112.5px;top:869px" width="8" height="11" viewBox="0 0 8 11"><g stroke="#d8d8d8" stroke-width="1" fill="none"><path d="M2 0.500H6M2.500 0.500V6M5.500 0.500V6M0.500 6.500H7.500M4 6.500V10.500"/></g><rect x="4.500" y="1" width="1.200" height="5" fill="#d8d8d8"/></svg>
<div class="r" style="left:396.00px;top:887.00px;width:178.00px;height:25.50px;background:#1e1e1e;border:3px solid #4ec24e;border-radius:4px;"></div>
<span class="t" id="t88" style="left:401.50px;top:890px;font-size:12.00px;color:#f1f1f1;letter-spacing:0.017px;">Tip: Modify code and hit Ctrl+S</span>
<div class="r" style="left:576.50px;top:885.50px;width:4.50px;height:46.00px;background:#2d2d30;"></div>
<span class="t" id="t89" style="left:585.00px;top:891px;font-size:12.00px;color:#f1f1f1;letter-spacing:-0.056px;">Watch:</span>
<div class="r" style="left:626.00px;top:889.00px;width:444.50px;height:22.50px;background:#252526;border:1px solid #58585c;"></div>
<div class="r" style="left:1075.00px;top:889.50px;width:22.00px;height:21.50px;background:#3f3f46;border:1px solid #4a4a4f;"></div>
<svg style="left:1081px;top:892px" width="11" height="16" viewBox="0 0 11 16"><rect x="0.700" y="0.700" width="9.600" height="14.600" rx="1.500" stroke="#f1f1f1" stroke-width="1.300" fill="none"/><rect x="2.500" y="2.700" width="6" height="2.500" fill="#f1f1f1"/><g fill="#f1f1f1"><rect x="2.500" y="7" width="1.500" height="1.500"/><rect x="4.800" y="7" width="1.500" height="1.500"/><rect x="7.100" y="7" width="1.500" height="1.500"/><rect x="2.500" y="9.500" width="1.500" height="1.500"/><rect x="4.800" y="9.500" width="1.500" height="1.500"/><rect x="7.100" y="9.500" width="1.500" height="1.500"/><rect x="2.500" y="12" width="1.500" height="1.500"/><rect x="4.800" y="12" width="1.500" height="1.500"/><rect x="7.100" y="12" width="1.500" height="1.500"/></g></svg>
<div class="r" style="left:1101.00px;top:889.50px;width:22.00px;height:21.50px;background:#3f3f46;border:1px solid #4a4a4f;"></div>
<svg style="left:1106px;top:895px" width="12" height="11" viewBox="0 0 12 11"><path d="M1 10.500C3 7 6 3.500 9 0.500M2.500 1.500C5 3.500 8.500 7 11 9.500" stroke="#1c1c1c" stroke-width="1.900" fill="none" stroke-linecap="round"/></svg>
<div class="r" style="left:396.00px;top:916.00px;width:178.50px;height:20.00px;background:#252526;border:1px solid #434346;"></div>
<div class="r" style="left:583.00px;top:918.00px;width:541.50px;height:20.00px;background:#252526;border:1px solid #6a6a6e;border-radius:2px 2px 0 0;"></div>
<div class="r" style="left:736.50px;top:919.00px;width:1.00px;height:14.00px;background:#434346;"></div>
<span class="t" id="t90" style="left:645.00px;top:919px;font-size:12.00px;color:#d0d0d0;letter-spacing:-0.004px;">Name</span>
<span class="t" id="t91" style="left:922.80px;top:919px;font-size:12.00px;color:#d0d0d0;letter-spacing:-0.358px;">Value</span>
</body></html>
